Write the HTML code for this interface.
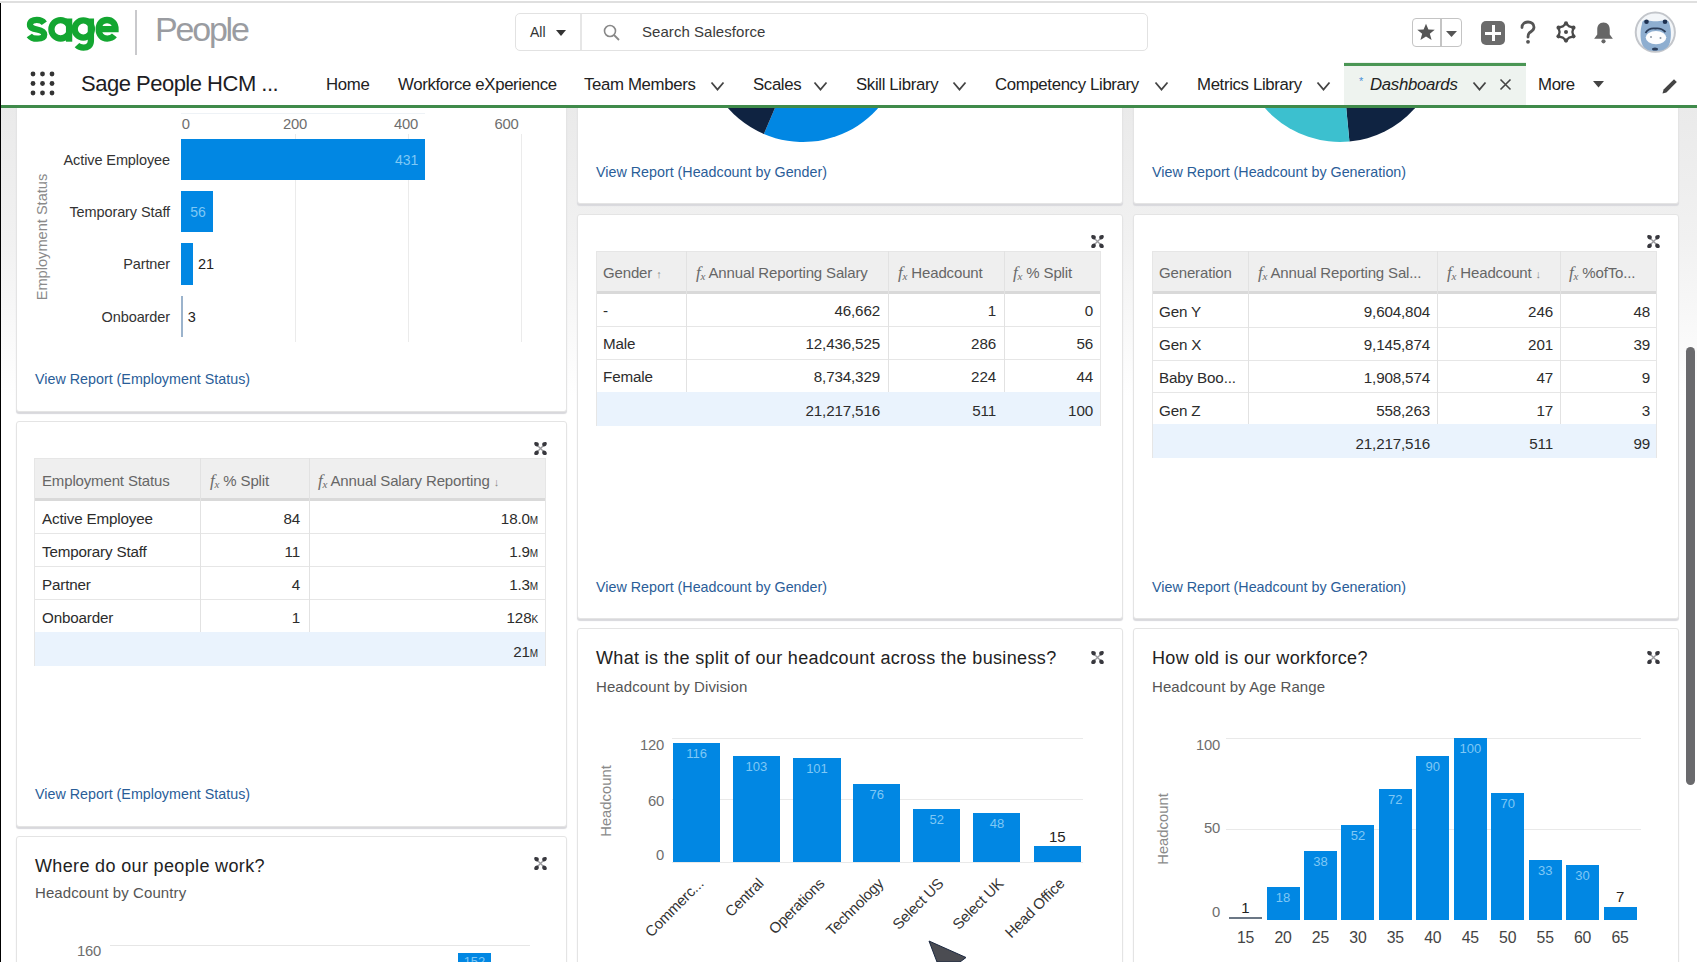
<!DOCTYPE html>
<html><head><meta charset="utf-8">
<style>
*{box-sizing:border-box;margin:0;padding:0}
html,body{width:1697px;height:962px;overflow:hidden;background:#fff;font-family:"Liberation Sans",sans-serif;color:#16325c}
.a{position:absolute;white-space:nowrap}
#top{position:absolute;left:0;top:0;width:1697px;height:107px;background:#fff}
.card{position:absolute;background:#fff;border:1px solid #e4e4e4;border-radius:3px;box-shadow:0 2px 1px #d8d8dc}
.nav{position:absolute;top:75px;font-size:16.8px;color:#222;letter-spacing:-0.35px}
.chev{position:absolute;top:81px}
.link{position:absolute;font-size:14.3px;color:#2a5d98;letter-spacing:0px}
.tbl{position:absolute;border-collapse:collapse;font-size:14px;color:#222}
.hdr{position:absolute;background:#f0f1f2;border-bottom:2px solid #dcdcdc}
.cell{position:absolute;font-size:14px;color:#222;letter-spacing:-0.3px}
.vl{position:absolute;width:1px;background:#e8e8e8}
.hl{position:absolute;height:1px;background:#e8e8e8}
.bar{position:absolute;background:#0187e3}
.ax{position:absolute;font-size:14.8px;color:#6e6e6e;letter-spacing:-0.2px}
.bl{position:absolute;font-size:13px;color:#7cc4f5;letter-spacing:-0.3px}
.ttl{position:absolute;font-size:18px;color:#222;letter-spacing:0.35px}
.sub{position:absolute;font-size:15px;color:#555;letter-spacing:0.1px}
</style></head>
<body>
<!-- page background -->
<div class="a" style="left:0;top:0;width:1697px;height:962px;background:#fff"></div>
<div class="a" style="left:0;top:3px;width:1.3px;height:962px;background:#000;z-index:50"></div>


<div class="a" style="left:1px;top:107px;width:1696px;height:290px;background:linear-gradient(#eaeaea,#f1f1f1 45%,#ffffff)"></div>
<div class="card" style="left:16px;top:60px;width:551px;height:352px"></div>
<div class="card" style="left:16px;top:421px;width:551px;height:406px"></div>
<div class="card" style="left:16px;top:836px;width:551px;height:264px"></div>
<div class="card" style="left:577px;top:60px;width:546px;height:144px"></div>
<div class="card" style="left:577px;top:214px;width:546px;height:405px"></div>
<div class="card" style="left:577px;top:628px;width:546px;height:472px"></div>
<div class="card" style="left:1133px;top:60px;width:546px;height:144px"></div>
<div class="card" style="left:1133px;top:214px;width:546px;height:405px"></div>
<div class="card" style="left:1133px;top:628px;width:546px;height:472px"></div>
<div class="a" style="left:181px;top:113px;width:244px;height:1px;background:#eef2f6"></div>
<div class="vl" style="left:294.5px;top:134px;height:208px;background:#ebebeb"></div>
<div class="vl" style="left:407.8px;top:134px;height:208px;background:#ebebeb"></div>
<div class="vl" style="left:521.0px;top:134px;height:208px;background:#ebebeb"></div>
<div class="ax" style="left:165.8px;top:116px;width:40px;text-align:center">0</div>
<div class="ax" style="left:275.0px;top:116px;width:40px;text-align:center">200</div>
<div class="ax" style="left:386.0px;top:116px;width:40px;text-align:center">400</div>
<div class="ax" style="left:486.5px;top:116px;width:40px;text-align:center">600</div>
<div class="bar" style="left:181px;top:139px;width:244.4px;height:41px;background:#0187e3"></div>
<div class="a lbl" style="left:0px;top:150.5px;width:170px;text-align:right;font-size:14.5px;color:#333;letter-spacing:-0.1px;line-height:18px">Active Employee</div>
<div class="a" style="left:365.4px;top:150.5px;width:53px;text-align:right;font-size:14px;color:#7fc8f5;line-height:18px">431</div>
<div class="bar" style="left:181px;top:191px;width:31.8px;height:41px;background:#0187e3"></div>
<div class="a lbl" style="left:0px;top:202.5px;width:170px;text-align:right;font-size:14.5px;color:#333;letter-spacing:-0.1px;line-height:18px">Temporary Staff</div>
<div class="a" style="left:152.8px;top:202.5px;width:53px;text-align:right;font-size:14px;color:#7fc8f5;line-height:18px">56</div>
<div class="bar" style="left:181px;top:243px;width:11.9px;height:42px;background:#0187e3"></div>
<div class="a lbl" style="left:0px;top:255.0px;width:170px;text-align:right;font-size:14.5px;color:#333;letter-spacing:-0.1px;line-height:18px">Partner</div>
<div class="a" style="left:197.9px;top:255.0px;font-size:14.5px;color:#222;line-height:18px">21</div>
<div class="bar" style="left:181px;top:296px;width:2.0px;height:41px;background:#9bb3cc"></div>
<div class="a lbl" style="left:0px;top:307.5px;width:170px;text-align:right;font-size:14.5px;color:#333;letter-spacing:-0.1px;line-height:18px">Onboarder</div>
<div class="a" style="left:187.7px;top:307.5px;font-size:14.5px;color:#222;line-height:18px">3</div>
<div class="a" style="left:42px;top:237px;width:0;height:0"><div class="a" style="left:-75px;top:-9px;width:150px;text-align:center;font-size:14.6px;color:#8a8a8a;letter-spacing:0px;line-height:18px;transform:rotate(-90deg)">Employment Status</div></div>
<div class="link a" style="left:35px;top:370px;line-height:18px">View Report (Employment Status)</div>
<svg class="a" style="left:533px;top:441px" width="15" height="15" viewBox="0 0 15 15"><path d="M4 4 L11 11 M11 4 L4 11" stroke="#9a9a9e" stroke-width="1.4"/><g fill="#38383e"><path d="M1.2 2.2 C1.2 0.8 3.6 0.6 5 1.6 C6.2 2.5 6 4.5 5 5.2 C3.8 6 1.2 5 1.2 2.2 Z"/><path d="M13.8 2.2 C13.8 0.8 11.4 0.6 10 1.6 C8.8 2.5 9 4.5 10 5.2 C11.2 6 13.8 5 13.8 2.2 Z"/><path d="M1.2 12.8 C1.2 14.2 3.6 14.4 5 13.4 C6.2 12.5 6 10.5 5 9.8 C3.8 9 1.2 10 1.2 12.8 Z"/><path d="M13.8 12.8 C13.8 14.2 11.4 14.4 10 13.4 C8.8 12.5 9 10.5 10 9.8 C11.2 9 13.8 10 13.8 12.8 Z"/></g></svg>
<div class="a" style="left:34px;top:458px;width:512px;height:42px;background:#efefef"></div>
<div class="a" style="left:34px;top:498px;width:512px;height:3px;background:#d9d9d9"></div>
<div class="a" style="left:34px;top:458px;width:512px;height:1px;background:#e6e6e6"></div>
<div class="hl" style="left:34px;top:533px;width:512px;background:#e6e6e6"></div>
<div class="hl" style="left:34px;top:566px;width:512px;background:#e6e6e6"></div>
<div class="hl" style="left:34px;top:599px;width:512px;background:#e6e6e6"></div>
<div class="hl" style="left:34px;top:632px;width:512px;background:#e6e6e6"></div>
<div class="a" style="left:34px;top:632px;width:512px;height:34px;background:#eaf3fd"></div>
<div class="vl" style="left:200px;top:458px;height:174px;background:#e2e2e2"></div>
<div class="vl" style="left:309px;top:458px;height:174px;background:#e2e2e2"></div>
<div class="vl" style="left:34px;top:458px;height:208px;background:#e6e6e6"></div>
<div class="vl" style="left:545px;top:458px;height:208px;background:#e6e6e6"></div>
<div class="a" style="left:42px;top:472px;font-size:15px;color:#666;letter-spacing:-0.15px;line-height:18px">Employment Status</div>
<div class="a" style="left:318px;top:472px;font-size:15px;color:#666;letter-spacing:-0.15px;line-height:18px"><i style="font-family:'Liberation Serif',serif;font-size:17px;color:#6a6a6a">f<span style="font-size:11px;position:relative;top:2px">x</span></i> Annual Salary Reporting <span style="font-size:11px;color:#888">&#8595;</span></div>
<div class="a" style="left:210px;top:472px;font-size:15px;color:#666;letter-spacing:-0.15px;line-height:18px"><i style="font-family:'Liberation Serif',serif;font-size:17px;color:#6a6a6a">f<span style="font-size:11px;position:relative;top:2px">x</span></i> % Split</div>
<div class="a" style="left:42px;top:509.5px;font-size:15.2px;color:#2c2c2c;letter-spacing:-0.15px;line-height:18px">Active Employee</div>
<div class="a" style="left:100px;top:509.5px;width:200px;text-align:right;font-size:15.2px;color:#2c2c2c;letter-spacing:-0.15px;line-height:18px">84</div>
<div class="a" style="left:338px;top:509.5px;width:200px;text-align:right;font-size:15.2px;color:#2c2c2c;letter-spacing:-0.15px;line-height:18px">18.0<span style="font-size:10px">M</span></div>
<div class="a" style="left:42px;top:542.5px;font-size:15.2px;color:#2c2c2c;letter-spacing:-0.15px;line-height:18px">Temporary Staff</div>
<div class="a" style="left:100px;top:542.5px;width:200px;text-align:right;font-size:15.2px;color:#2c2c2c;letter-spacing:-0.15px;line-height:18px">11</div>
<div class="a" style="left:338px;top:542.5px;width:200px;text-align:right;font-size:15.2px;color:#2c2c2c;letter-spacing:-0.15px;line-height:18px">1.9<span style="font-size:10px">M</span></div>
<div class="a" style="left:42px;top:575.5px;font-size:15.2px;color:#2c2c2c;letter-spacing:-0.15px;line-height:18px">Partner</div>
<div class="a" style="left:100px;top:575.5px;width:200px;text-align:right;font-size:15.2px;color:#2c2c2c;letter-spacing:-0.15px;line-height:18px">4</div>
<div class="a" style="left:338px;top:575.5px;width:200px;text-align:right;font-size:15.2px;color:#2c2c2c;letter-spacing:-0.15px;line-height:18px">1.3<span style="font-size:10px">M</span></div>
<div class="a" style="left:42px;top:608.5px;font-size:15.2px;color:#2c2c2c;letter-spacing:-0.15px;line-height:18px">Onboarder</div>
<div class="a" style="left:100px;top:608.5px;width:200px;text-align:right;font-size:15.2px;color:#2c2c2c;letter-spacing:-0.15px;line-height:18px">1</div>
<div class="a" style="left:338px;top:608.5px;width:200px;text-align:right;font-size:15.2px;color:#2c2c2c;letter-spacing:-0.15px;line-height:18px">128<span style="font-size:10px">K</span></div>
<div class="a" style="left:338px;top:642.5px;width:200px;text-align:right;font-size:15.2px;color:#2c2c2c;letter-spacing:-0.15px;line-height:18px">21<span style="font-size:10px">M</span></div>
<div class="link a" style="left:35px;top:785px;line-height:18px">View Report (Employment Status)</div>
<div class="ttl a" style="left:35px;top:855px;line-height:22px">Where do our people work?</div>
<div class="sub a" style="left:35px;top:884px;line-height:18px">Headcount by Country</div>
<svg class="a" style="left:533px;top:856px" width="15" height="15" viewBox="0 0 15 15"><path d="M4 4 L11 11 M11 4 L4 11" stroke="#9a9a9e" stroke-width="1.4"/><g fill="#38383e"><path d="M1.2 2.2 C1.2 0.8 3.6 0.6 5 1.6 C6.2 2.5 6 4.5 5 5.2 C3.8 6 1.2 5 1.2 2.2 Z"/><path d="M13.8 2.2 C13.8 0.8 11.4 0.6 10 1.6 C8.8 2.5 9 4.5 10 5.2 C11.2 6 13.8 5 13.8 2.2 Z"/><path d="M1.2 12.8 C1.2 14.2 3.6 14.4 5 13.4 C6.2 12.5 6 10.5 5 9.8 C3.8 9 1.2 10 1.2 12.8 Z"/><path d="M13.8 12.8 C13.8 14.2 11.4 14.4 10 13.4 C8.8 12.5 9 10.5 10 9.8 C11.2 9 13.8 10 13.8 12.8 Z"/></g></svg>
<div class="hl" style="left:110px;top:945px;width:420px;background:#e6e6e6"></div>
<div class="ax a" style="left:77px;top:943px;line-height:16px">160</div>
<div class="bar" style="left:458px;top:952.5px;width:33px;height:20px"></div>
<div class="a" style="left:458px;top:954px;width:33px;text-align:center;font-size:13px;color:#7fc8f5;line-height:16px">152</div>
<svg class="a" style="left:703px;top:108px" width="200" height="35" viewBox="703 108 200 35"><path d="M803 42 L903.00 42.00 A100 100 0 0 1 763.85 134.02 Z" fill="#0187e3"/><path d="M803 42 L763.85 134.02 A100 100 0 0 1 703.00 42.00 Z" fill="#0f2341"/></svg>
<div class="link a" style="left:596px;top:163px;line-height:18px">View Report (Headcount by Gender)</div>
<svg class="a" style="left:1240px;top:108px" width="200" height="35" viewBox="1240 108 200 35"><path d="M1340 42 L1440.00 42.00 A100 100 0 0 1 1349.41 141.56 Z" fill="#0f2341"/><path d="M1340 42 L1349.41 141.56 A100 100 0 0 1 1240.00 42.00 Z" fill="#3cc0cf"/></svg>
<div class="link a" style="left:1152px;top:163px;line-height:18px">View Report (Headcount by Generation)</div>
<svg class="a" style="left:1090px;top:234px" width="15" height="15" viewBox="0 0 15 15"><path d="M4 4 L11 11 M11 4 L4 11" stroke="#9a9a9e" stroke-width="1.4"/><g fill="#38383e"><path d="M1.2 2.2 C1.2 0.8 3.6 0.6 5 1.6 C6.2 2.5 6 4.5 5 5.2 C3.8 6 1.2 5 1.2 2.2 Z"/><path d="M13.8 2.2 C13.8 0.8 11.4 0.6 10 1.6 C8.8 2.5 9 4.5 10 5.2 C11.2 6 13.8 5 13.8 2.2 Z"/><path d="M1.2 12.8 C1.2 14.2 3.6 14.4 5 13.4 C6.2 12.5 6 10.5 5 9.8 C3.8 9 1.2 10 1.2 12.8 Z"/><path d="M13.8 12.8 C13.8 14.2 11.4 14.4 10 13.4 C8.8 12.5 9 10.5 10 9.8 C11.2 9 13.8 10 13.8 12.8 Z"/></g></svg>
<div class="a" style="left:596px;top:251px;width:505px;height:42px;background:#efefef"></div>
<div class="a" style="left:596px;top:291px;width:505px;height:3px;background:#d9d9d9"></div>
<div class="a" style="left:596px;top:251px;width:505px;height:1px;background:#e6e6e6"></div>
<div class="hl" style="left:596px;top:326px;width:505px;background:#e6e6e6"></div>
<div class="hl" style="left:596px;top:359px;width:505px;background:#e6e6e6"></div>
<div class="hl" style="left:596px;top:392px;width:505px;background:#e6e6e6"></div>
<div class="a" style="left:596px;top:392px;width:505px;height:34px;background:#eaf3fd"></div>
<div class="vl" style="left:686px;top:251px;height:141px;background:#e2e2e2"></div>
<div class="vl" style="left:888px;top:251px;height:141px;background:#e2e2e2"></div>
<div class="vl" style="left:1004px;top:251px;height:141px;background:#e2e2e2"></div>
<div class="vl" style="left:596px;top:251px;height:175px;background:#e6e6e6"></div>
<div class="vl" style="left:1100px;top:251px;height:175px;background:#e6e6e6"></div>
<div class="a" style="left:603px;top:264px;font-size:15px;color:#666;letter-spacing:-0.15px;line-height:18px">Gender <span style="font-size:11px;color:#888">&#8593;</span></div>
<div class="a" style="left:696px;top:264px;font-size:15px;color:#666;letter-spacing:-0.15px;line-height:18px"><i style="font-family:'Liberation Serif',serif;font-size:17px;color:#6a6a6a">f<span style="font-size:11px;position:relative;top:2px">x</span></i> Annual Reporting Salary</div>
<div class="a" style="left:898px;top:264px;font-size:15px;color:#666;letter-spacing:-0.15px;line-height:18px"><i style="font-family:'Liberation Serif',serif;font-size:17px;color:#6a6a6a">f<span style="font-size:11px;position:relative;top:2px">x</span></i> Headcount</div>
<div class="a" style="left:1013px;top:264px;font-size:15px;color:#666;letter-spacing:-0.15px;line-height:18px"><i style="font-family:'Liberation Serif',serif;font-size:17px;color:#6a6a6a">f<span style="font-size:11px;position:relative;top:2px">x</span></i> % Split</div>
<div class="a" style="left:603px;top:302.0px;font-size:15.2px;color:#2c2c2c;letter-spacing:-0.15px;line-height:18px">-</div>
<div class="a" style="left:680px;top:302.0px;width:200px;text-align:right;font-size:15.2px;color:#2c2c2c;letter-spacing:-0.15px;line-height:18px">46,662</div>
<div class="a" style="left:796px;top:302.0px;width:200px;text-align:right;font-size:15.2px;color:#2c2c2c;letter-spacing:-0.15px;line-height:18px">1</div>
<div class="a" style="left:893px;top:302.0px;width:200px;text-align:right;font-size:15.2px;color:#2c2c2c;letter-spacing:-0.15px;line-height:18px">0</div>
<div class="a" style="left:603px;top:335.0px;font-size:15.2px;color:#2c2c2c;letter-spacing:-0.15px;line-height:18px">Male</div>
<div class="a" style="left:680px;top:335.0px;width:200px;text-align:right;font-size:15.2px;color:#2c2c2c;letter-spacing:-0.15px;line-height:18px">12,436,525</div>
<div class="a" style="left:796px;top:335.0px;width:200px;text-align:right;font-size:15.2px;color:#2c2c2c;letter-spacing:-0.15px;line-height:18px">286</div>
<div class="a" style="left:893px;top:335.0px;width:200px;text-align:right;font-size:15.2px;color:#2c2c2c;letter-spacing:-0.15px;line-height:18px">56</div>
<div class="a" style="left:603px;top:368.0px;font-size:15.2px;color:#2c2c2c;letter-spacing:-0.15px;line-height:18px">Female</div>
<div class="a" style="left:680px;top:368.0px;width:200px;text-align:right;font-size:15.2px;color:#2c2c2c;letter-spacing:-0.15px;line-height:18px">8,734,329</div>
<div class="a" style="left:796px;top:368.0px;width:200px;text-align:right;font-size:15.2px;color:#2c2c2c;letter-spacing:-0.15px;line-height:18px">224</div>
<div class="a" style="left:893px;top:368.0px;width:200px;text-align:right;font-size:15.2px;color:#2c2c2c;letter-spacing:-0.15px;line-height:18px">44</div>
<div class="a" style="left:680px;top:401.5px;width:200px;text-align:right;font-size:15.2px;color:#2c2c2c;letter-spacing:-0.15px;line-height:18px">21,217,516</div>
<div class="a" style="left:796px;top:401.5px;width:200px;text-align:right;font-size:15.2px;color:#2c2c2c;letter-spacing:-0.15px;line-height:18px">511</div>
<div class="a" style="left:893px;top:401.5px;width:200px;text-align:right;font-size:15.2px;color:#2c2c2c;letter-spacing:-0.15px;line-height:18px">100</div>
<div class="link a" style="left:596px;top:578px;line-height:18px">View Report (Headcount by Gender)</div>
<svg class="a" style="left:1646px;top:234px" width="15" height="15" viewBox="0 0 15 15"><path d="M4 4 L11 11 M11 4 L4 11" stroke="#9a9a9e" stroke-width="1.4"/><g fill="#38383e"><path d="M1.2 2.2 C1.2 0.8 3.6 0.6 5 1.6 C6.2 2.5 6 4.5 5 5.2 C3.8 6 1.2 5 1.2 2.2 Z"/><path d="M13.8 2.2 C13.8 0.8 11.4 0.6 10 1.6 C8.8 2.5 9 4.5 10 5.2 C11.2 6 13.8 5 13.8 2.2 Z"/><path d="M1.2 12.8 C1.2 14.2 3.6 14.4 5 13.4 C6.2 12.5 6 10.5 5 9.8 C3.8 9 1.2 10 1.2 12.8 Z"/><path d="M13.8 12.8 C13.8 14.2 11.4 14.4 10 13.4 C8.8 12.5 9 10.5 10 9.8 C11.2 9 13.8 10 13.8 12.8 Z"/></g></svg>
<div class="a" style="left:1152px;top:251px;width:505px;height:42px;background:#efefef"></div>
<div class="a" style="left:1152px;top:291px;width:505px;height:3px;background:#d9d9d9"></div>
<div class="a" style="left:1152px;top:251px;width:505px;height:1px;background:#e6e6e6"></div>
<div class="hl" style="left:1152px;top:327px;width:505px;background:#e6e6e6"></div>
<div class="hl" style="left:1152px;top:360px;width:505px;background:#e6e6e6"></div>
<div class="hl" style="left:1152px;top:392px;width:505px;background:#e6e6e6"></div>
<div class="hl" style="left:1152px;top:424px;width:505px;background:#e6e6e6"></div>
<div class="a" style="left:1152px;top:424px;width:505px;height:34px;background:#eaf3fd"></div>
<div class="vl" style="left:1248px;top:251px;height:173px;background:#e2e2e2"></div>
<div class="vl" style="left:1437px;top:251px;height:173px;background:#e2e2e2"></div>
<div class="vl" style="left:1560px;top:251px;height:173px;background:#e2e2e2"></div>
<div class="vl" style="left:1152px;top:251px;height:207px;background:#e6e6e6"></div>
<div class="vl" style="left:1656px;top:251px;height:207px;background:#e6e6e6"></div>
<div class="a" style="left:1159px;top:264px;font-size:15px;color:#666;letter-spacing:-0.15px;line-height:18px">Generation</div>
<div class="a" style="left:1258px;top:264px;font-size:15px;color:#666;letter-spacing:-0.15px;line-height:18px"><i style="font-family:'Liberation Serif',serif;font-size:17px;color:#6a6a6a">f<span style="font-size:11px;position:relative;top:2px">x</span></i> Annual Reporting Sal...</div>
<div class="a" style="left:1447px;top:264px;font-size:15px;color:#666;letter-spacing:-0.15px;line-height:18px"><i style="font-family:'Liberation Serif',serif;font-size:17px;color:#6a6a6a">f<span style="font-size:11px;position:relative;top:2px">x</span></i> Headcount <span style="font-size:11px;color:#888">&#8595;</span></div>
<div class="a" style="left:1569px;top:264px;font-size:15px;color:#666;letter-spacing:-0.15px;line-height:18px"><i style="font-family:'Liberation Serif',serif;font-size:17px;color:#6a6a6a">f<span style="font-size:11px;position:relative;top:2px">x</span></i> %ofTo...</div>
<div class="a" style="left:1159px;top:302.5px;font-size:15.2px;color:#2c2c2c;letter-spacing:-0.15px;line-height:18px">Gen Y</div>
<div class="a" style="left:1230px;top:302.5px;width:200px;text-align:right;font-size:15.2px;color:#2c2c2c;letter-spacing:-0.15px;line-height:18px">9,604,804</div>
<div class="a" style="left:1353px;top:302.5px;width:200px;text-align:right;font-size:15.2px;color:#2c2c2c;letter-spacing:-0.15px;line-height:18px">246</div>
<div class="a" style="left:1450px;top:302.5px;width:200px;text-align:right;font-size:15.2px;color:#2c2c2c;letter-spacing:-0.15px;line-height:18px">48</div>
<div class="a" style="left:1159px;top:335.5px;font-size:15.2px;color:#2c2c2c;letter-spacing:-0.15px;line-height:18px">Gen X</div>
<div class="a" style="left:1230px;top:335.5px;width:200px;text-align:right;font-size:15.2px;color:#2c2c2c;letter-spacing:-0.15px;line-height:18px">9,145,874</div>
<div class="a" style="left:1353px;top:335.5px;width:200px;text-align:right;font-size:15.2px;color:#2c2c2c;letter-spacing:-0.15px;line-height:18px">201</div>
<div class="a" style="left:1450px;top:335.5px;width:200px;text-align:right;font-size:15.2px;color:#2c2c2c;letter-spacing:-0.15px;line-height:18px">39</div>
<div class="a" style="left:1159px;top:368.5px;font-size:15.2px;color:#2c2c2c;letter-spacing:-0.15px;line-height:18px">Baby Boo...</div>
<div class="a" style="left:1230px;top:368.5px;width:200px;text-align:right;font-size:15.2px;color:#2c2c2c;letter-spacing:-0.15px;line-height:18px">1,908,574</div>
<div class="a" style="left:1353px;top:368.5px;width:200px;text-align:right;font-size:15.2px;color:#2c2c2c;letter-spacing:-0.15px;line-height:18px">47</div>
<div class="a" style="left:1450px;top:368.5px;width:200px;text-align:right;font-size:15.2px;color:#2c2c2c;letter-spacing:-0.15px;line-height:18px">9</div>
<div class="a" style="left:1159px;top:401.5px;font-size:15.2px;color:#2c2c2c;letter-spacing:-0.15px;line-height:18px">Gen Z</div>
<div class="a" style="left:1230px;top:401.5px;width:200px;text-align:right;font-size:15.2px;color:#2c2c2c;letter-spacing:-0.15px;line-height:18px">558,263</div>
<div class="a" style="left:1353px;top:401.5px;width:200px;text-align:right;font-size:15.2px;color:#2c2c2c;letter-spacing:-0.15px;line-height:18px">17</div>
<div class="a" style="left:1450px;top:401.5px;width:200px;text-align:right;font-size:15.2px;color:#2c2c2c;letter-spacing:-0.15px;line-height:18px">3</div>
<div class="a" style="left:1230px;top:434.5px;width:200px;text-align:right;font-size:15.2px;color:#2c2c2c;letter-spacing:-0.15px;line-height:18px">21,217,516</div>
<div class="a" style="left:1353px;top:434.5px;width:200px;text-align:right;font-size:15.2px;color:#2c2c2c;letter-spacing:-0.15px;line-height:18px">511</div>
<div class="a" style="left:1450px;top:434.5px;width:200px;text-align:right;font-size:15.2px;color:#2c2c2c;letter-spacing:-0.15px;line-height:18px">99</div>
<div class="link a" style="left:1152px;top:578px;line-height:18px">View Report (Headcount by Generation)</div>
<div class="ttl a" style="left:596px;top:647px;line-height:22px">What is the split of our headcount across the business?</div>
<div class="sub a" style="left:596px;top:678px;line-height:18px">Headcount by Division</div>
<svg class="a" style="left:1090px;top:650px" width="15" height="15" viewBox="0 0 15 15"><path d="M4 4 L11 11 M11 4 L4 11" stroke="#9a9a9e" stroke-width="1.4"/><g fill="#38383e"><path d="M1.2 2.2 C1.2 0.8 3.6 0.6 5 1.6 C6.2 2.5 6 4.5 5 5.2 C3.8 6 1.2 5 1.2 2.2 Z"/><path d="M13.8 2.2 C13.8 0.8 11.4 0.6 10 1.6 C8.8 2.5 9 4.5 10 5.2 C11.2 6 13.8 5 13.8 2.2 Z"/><path d="M1.2 12.8 C1.2 14.2 3.6 14.4 5 13.4 C6.2 12.5 6 10.5 5 9.8 C3.8 9 1.2 10 1.2 12.8 Z"/><path d="M13.8 12.8 C13.8 14.2 11.4 14.4 10 13.4 C8.8 12.5 9 10.5 10 9.8 C11.2 9 13.8 10 13.8 12.8 Z"/></g></svg>
<div class="hl" style="left:672px;top:738px;width:411px;background:#e9e9e9"></div>
<div class="hl" style="left:672px;top:799px;width:411px;background:#e9e9e9"></div>
<div class="hl" style="left:672px;top:862px;width:411px;background:#e9e9e9"></div>
<div class="ax a" style="left:624px;top:736.6px;width:40px;text-align:right;line-height:16px">120</div>
<div class="ax a" style="left:624px;top:792.6px;width:40px;text-align:right;line-height:16px">60</div>
<div class="ax a" style="left:624px;top:847px;width:40px;text-align:right;line-height:16px">0</div>
<div class="a" style="left:605.5px;top:801px;width:0;height:0"><div class="a" style="left:-50px;top:-9px;width:100px;text-align:center;font-size:14.8px;color:#8a8a8a;line-height:18px;transform:rotate(-90deg)">Headcount</div></div>
<div class="bar" style="left:673.0px;top:743.0px;width:47.2px;height:118.7px"></div>
<div class="a" style="left:671.6px;top:746.0px;width:50px;text-align:center;font-size:13px;color:#7fc8f5;line-height:16px">116</div>
<div class="a" style="left:581.1px;top:872.0px;width:120px;text-align:right;font-size:15px;color:#333;line-height:18px;letter-spacing:-0.2px;transform-origin:100% 50%;transform:rotate(-45deg)">Commerc...</div>
<div class="bar" style="left:732.7px;top:756.3px;width:47.2px;height:105.4px"></div>
<div class="a" style="left:731.3px;top:759.3px;width:50px;text-align:center;font-size:13px;color:#7fc8f5;line-height:16px">103</div>
<div class="a" style="left:640.8px;top:872.0px;width:120px;text-align:right;font-size:15px;color:#333;line-height:18px;letter-spacing:-0.2px;transform-origin:100% 50%;transform:rotate(-45deg)">Central</div>
<div class="bar" style="left:793.4px;top:758.3px;width:47.2px;height:103.4px"></div>
<div class="a" style="left:792.0px;top:761.3px;width:50px;text-align:center;font-size:13px;color:#7fc8f5;line-height:16px">101</div>
<div class="a" style="left:701.5px;top:872.0px;width:120px;text-align:right;font-size:15px;color:#333;line-height:18px;letter-spacing:-0.2px;transform-origin:100% 50%;transform:rotate(-45deg)">Operations</div>
<div class="bar" style="left:853.2px;top:783.9px;width:47.2px;height:77.8px"></div>
<div class="a" style="left:851.8px;top:786.9px;width:50px;text-align:center;font-size:13px;color:#7fc8f5;line-height:16px">76</div>
<div class="a" style="left:761.3px;top:872.0px;width:120px;text-align:right;font-size:15px;color:#333;line-height:18px;letter-spacing:-0.2px;transform-origin:100% 50%;transform:rotate(-45deg)">Technology</div>
<div class="bar" style="left:913.2px;top:808.5px;width:47.2px;height:53.2px"></div>
<div class="a" style="left:911.8px;top:811.5px;width:50px;text-align:center;font-size:13px;color:#7fc8f5;line-height:16px">52</div>
<div class="a" style="left:821.3px;top:872.0px;width:120px;text-align:right;font-size:15px;color:#333;line-height:18px;letter-spacing:-0.2px;transform-origin:100% 50%;transform:rotate(-45deg)">Select US</div>
<div class="bar" style="left:973.3px;top:812.6px;width:47.2px;height:49.1px"></div>
<div class="a" style="left:971.9px;top:815.6px;width:50px;text-align:center;font-size:13px;color:#7fc8f5;line-height:16px">48</div>
<div class="a" style="left:881.4px;top:872.0px;width:120px;text-align:right;font-size:15px;color:#333;line-height:18px;letter-spacing:-0.2px;transform-origin:100% 50%;transform:rotate(-45deg)">Select UK</div>
<div class="bar" style="left:1033.7px;top:846.4px;width:47.2px;height:15.4px"></div>
<div class="a" style="left:1032.3px;top:828.9px;width:50px;text-align:center;font-size:15px;color:#222;line-height:16px">15</div>
<div class="a" style="left:941.8px;top:872.0px;width:120px;text-align:right;font-size:15px;color:#333;line-height:18px;letter-spacing:-0.2px;transform-origin:100% 50%;transform:rotate(-45deg)">Head Office</div>
<div class="ttl a" style="left:1152px;top:647px;line-height:22px">How old is our workforce?</div>
<div class="sub a" style="left:1152px;top:678px;line-height:18px">Headcount by Age Range</div>
<svg class="a" style="left:1646px;top:650px" width="15" height="15" viewBox="0 0 15 15"><path d="M4 4 L11 11 M11 4 L4 11" stroke="#9a9a9e" stroke-width="1.4"/><g fill="#38383e"><path d="M1.2 2.2 C1.2 0.8 3.6 0.6 5 1.6 C6.2 2.5 6 4.5 5 5.2 C3.8 6 1.2 5 1.2 2.2 Z"/><path d="M13.8 2.2 C13.8 0.8 11.4 0.6 10 1.6 C8.8 2.5 9 4.5 10 5.2 C11.2 6 13.8 5 13.8 2.2 Z"/><path d="M1.2 12.8 C1.2 14.2 3.6 14.4 5 13.4 C6.2 12.5 6 10.5 5 9.8 C3.8 9 1.2 10 1.2 12.8 Z"/><path d="M13.8 12.8 C13.8 14.2 11.4 14.4 10 13.4 C8.8 12.5 9 10.5 10 9.8 C11.2 9 13.8 10 13.8 12.8 Z"/></g></svg>
<div class="hl" style="left:1226px;top:737.6px;width:415px;background:#e9e9e9"></div>
<div class="hl" style="left:1226px;top:828.6px;width:415px;background:#e9e9e9"></div>
<div class="ax a" style="left:1180px;top:736.6px;width:40px;text-align:right;line-height:16px">100</div>
<div class="ax a" style="left:1180px;top:820px;width:40px;text-align:right;line-height:16px">50</div>
<div class="ax a" style="left:1180px;top:904.4px;width:40px;text-align:right;line-height:16px">0</div>
<div class="a" style="left:1162.5px;top:829px;width:0;height:0"><div class="a" style="left:-50px;top:-9px;width:100px;text-align:center;font-size:14.8px;color:#8a8a8a;line-height:18px;transform:rotate(-90deg)">Headcount</div></div>
<div class="a" style="left:1229.0px;top:917px;width:33px;height:2px;background:#6b7785"></div>
<div class="a" style="left:1220.5px;top:899.7px;width:50px;text-align:center;font-size:15px;color:#222;line-height:16px">1</div>
<div class="ax a" style="left:1220.5px;top:928.5px;width:50px;text-align:center;font-size:15.8px;color:#444;line-height:18px">15</div>
<div class="bar" style="left:1266.5px;top:887.2px;width:33px;height:32.8px"></div>
<div class="a" style="left:1258.0px;top:890.2px;width:50px;text-align:center;font-size:13px;color:#7fc8f5;line-height:16px">18</div>
<div class="ax a" style="left:1258.0px;top:928.5px;width:50px;text-align:center;font-size:15.8px;color:#444;line-height:18px">20</div>
<div class="bar" style="left:1303.9px;top:850.8px;width:33px;height:69.2px"></div>
<div class="a" style="left:1295.4px;top:853.8px;width:50px;text-align:center;font-size:13px;color:#7fc8f5;line-height:16px">38</div>
<div class="ax a" style="left:1295.4px;top:928.5px;width:50px;text-align:center;font-size:15.8px;color:#444;line-height:18px">25</div>
<div class="bar" style="left:1341.4px;top:825.4px;width:33px;height:94.6px"></div>
<div class="a" style="left:1332.9px;top:828.4px;width:50px;text-align:center;font-size:13px;color:#7fc8f5;line-height:16px">52</div>
<div class="ax a" style="left:1332.9px;top:928.5px;width:50px;text-align:center;font-size:15.8px;color:#444;line-height:18px">30</div>
<div class="bar" style="left:1378.8px;top:789.0px;width:33px;height:131.0px"></div>
<div class="a" style="left:1370.3px;top:792.0px;width:50px;text-align:center;font-size:13px;color:#7fc8f5;line-height:16px">72</div>
<div class="ax a" style="left:1370.3px;top:928.5px;width:50px;text-align:center;font-size:15.8px;color:#444;line-height:18px">35</div>
<div class="bar" style="left:1416.3px;top:756.2px;width:33px;height:163.8px"></div>
<div class="a" style="left:1407.8px;top:759.2px;width:50px;text-align:center;font-size:13px;color:#7fc8f5;line-height:16px">90</div>
<div class="ax a" style="left:1407.8px;top:928.5px;width:50px;text-align:center;font-size:15.8px;color:#444;line-height:18px">40</div>
<div class="bar" style="left:1453.8px;top:738.0px;width:33px;height:182.0px"></div>
<div class="a" style="left:1445.3px;top:741.0px;width:50px;text-align:center;font-size:13px;color:#7fc8f5;line-height:16px">100</div>
<div class="ax a" style="left:1445.3px;top:928.5px;width:50px;text-align:center;font-size:15.8px;color:#444;line-height:18px">45</div>
<div class="bar" style="left:1491.2px;top:792.6px;width:33px;height:127.4px"></div>
<div class="a" style="left:1482.7px;top:795.6px;width:50px;text-align:center;font-size:13px;color:#7fc8f5;line-height:16px">70</div>
<div class="ax a" style="left:1482.7px;top:928.5px;width:50px;text-align:center;font-size:15.8px;color:#444;line-height:18px">50</div>
<div class="bar" style="left:1528.7px;top:859.9px;width:33px;height:60.1px"></div>
<div class="a" style="left:1520.2px;top:862.9px;width:50px;text-align:center;font-size:13px;color:#7fc8f5;line-height:16px">33</div>
<div class="ax a" style="left:1520.2px;top:928.5px;width:50px;text-align:center;font-size:15.8px;color:#444;line-height:18px">55</div>
<div class="bar" style="left:1566.1px;top:865.4px;width:33px;height:54.6px"></div>
<div class="a" style="left:1557.6px;top:868.4px;width:50px;text-align:center;font-size:13px;color:#7fc8f5;line-height:16px">30</div>
<div class="ax a" style="left:1557.6px;top:928.5px;width:50px;text-align:center;font-size:15.8px;color:#444;line-height:18px">60</div>
<div class="bar" style="left:1603.6px;top:907.3px;width:33px;height:12.7px"></div>
<div class="a" style="left:1595.1px;top:888.8px;width:50px;text-align:center;font-size:15px;color:#222;line-height:16px">7</div>
<div class="ax a" style="left:1595.1px;top:928.5px;width:50px;text-align:center;font-size:15.8px;color:#444;line-height:18px">65</div>
<div class="a" style="left:1686px;top:347px;width:9px;height:438px;border-radius:5px;background:#6a6a6d"></div>
<svg class="a" style="left:920px;top:935px" width="60" height="30"><path d="M9 6 L46 22.5 L40 27 L17 27 Z" fill="#4b4c52" stroke="#1b2840" stroke-width="1"/></svg>
<!-- TOP HEADER -->
<div id="top">
  <div class="a" style="left:0;top:1px;width:1697px;height:2px;background:#dfdfdf"></div>
  <svg class="a" style="left:0;top:0" width="130" height="60" viewBox="0 0 130 60"><g fill="none" stroke="#13a631" stroke-width="6.3" stroke-linecap="round">
<path d="M44.3 23.2 C42.6 20.8 39.6 19.9 36.8 19.9 C32.6 19.9 30 21.7 30 24.8 C30 28 33 28.7 37 29.5 C41.3 30.4 44.2 31.5 44.2 34.6 C44.2 37.6 41.4 38.7 37.2 38.7 C33.4 38.7 30.8 37.6 29.3 35.4" stroke-linecap="butt"/>
<circle cx="60.6" cy="29.3" r="9.2"/>
<path d="M69.1 18.5 L69.1 41.7" stroke-linecap="butt"/>
<circle cx="83.3" cy="29" r="8.6"/>
<path d="M90.9 18.5 L90.9 40.5 C90.9 45.8 87.5 47.6 83.5 47.6 C80.5 47.6 78.5 46.8 77 45.2" stroke-linecap="butt"/>
<path d="M98.8 29.2 L115.5 29.2 C115.5 23.5 112 20 107 20 C101.8 20 98.7 24 98.7 29.3 C98.7 34.6 102 38.6 107.2 38.6 C110.6 38.6 112.8 37.4 114.4 35.4" stroke-linecap="butt"/>
</g></svg>
  <div class="a" style="left:135px;top:10px;width:2px;height:45px;background:#c9c9cc"></div>
  <div class="a" style="left:155px;top:9px;font-size:34px;color:#9a9ca1;letter-spacing:-2.2px;line-height:40px">People</div>
  <!-- search -->
  <div class="a" style="left:515px;top:13px;width:633px;height:38px;border:1.5px solid #e2e2e2;border-radius:5px;background:#fff"></div>
  <div class="a" style="left:580px;top:14px;width:1.5px;height:36px;background:#e6e6e6"></div>
  <div class="a" style="left:530px;top:24px;font-size:14px;color:#333;line-height:16px">All</div>
  <svg class="a" style="left:555px;top:29px" width="12" height="8"><path d="M1 1 L11 1 L6 7 Z" fill="#333"/></svg>
  <svg class="a" style="left:602px;top:23px" width="20" height="20"><circle cx="8" cy="8" r="5.5" fill="none" stroke="#888" stroke-width="1.6"/><path d="M12 12 L17 17" stroke="#888" stroke-width="1.8"/></svg>
  <div class="a" style="left:642px;top:23px;font-size:15px;color:#3a3a3a;line-height:17px;letter-spacing:0.05px">Search Salesforce</div>
  <!-- right icons -->
  <div class="a" style="left:1412px;top:18px;width:50px;height:29px;border:1.5px solid #c4c4c4;border-radius:4px"></div>
  <div class="a" style="left:1440px;top:19px;width:1.5px;height:27px;background:#c4c4c4"></div>
  <svg class="a" style="left:1416px;top:22px" width="20" height="20" viewBox="0 0 24 24"><path d="M12 2 L14.9 9 L22.5 9.3 L16.6 14.1 L18.7 21.5 L12 17.3 L5.3 21.5 L7.4 14.1 L1.5 9.3 L9.1 9 Z" fill="#555"/></svg>
  <svg class="a" style="left:1445px;top:30px" width="13" height="8"><path d="M1 1 L12 1 L6.5 7 Z" fill="#555"/></svg>
  <div class="a" style="left:1481px;top:21px;width:24px;height:24px;background:#6b6b6b;border-radius:5px"></div>
  <div class="a" style="left:1491.5px;top:25px;width:3px;height:16px;background:#fff"></div>
  <div class="a" style="left:1485px;top:31.5px;width:16px;height:3px;background:#fff"></div>
  <svg class="a" style="left:1518px;top:20px" width="20" height="25" viewBox="0 0 20 25"><path d="M4 7.5 C4 3.5 7 2 10 2 C13.5 2 16 4 16 7.2 C16 10.5 13 11.5 11.2 13 C10.2 14 10 15 10 17" fill="none" stroke="#555" stroke-width="2.8" stroke-linecap="round"/><circle cx="10" cy="21.8" r="1.9" fill="#555"/></svg>
  <svg class="a" style="left:1555px;top:21px" width="22" height="22" viewBox="0 0 22 22"><path d="M11.00 2.40 L14.20 5.46 L18.45 6.70 L17.40 11.00 L18.45 15.30 L14.20 16.54 L11.00 19.60 L7.80 16.54 L3.55 15.30 L4.60 11.00 L3.55 6.70 L7.80 5.46 Z" fill="none" stroke="#4a4a4a" stroke-width="2.3" stroke-linejoin="round"/><g fill="#4a4a4a"><circle cx="11.00" cy="2.40" r="2.1"/><circle cx="18.45" cy="6.70" r="2.1"/><circle cx="18.45" cy="15.30" r="2.1"/><circle cx="11.00" cy="19.60" r="2.1"/><circle cx="3.55" cy="15.30" r="2.1"/><circle cx="3.55" cy="6.70" r="2.1"/><circle cx="11" cy="11" r="2"/></g></svg>
  <svg class="a" style="left:1591px;top:20px" width="25" height="25" viewBox="0 0 24 24"><path d="M12 2.5 C8 2.5 6 5.5 6 9 L6 14 L3 18 L21 18 L18 14 L18 9 C18 5.5 16 2.5 12 2.5 Z" fill="#666"/><circle cx="12" cy="20.5" r="2" fill="#666"/></svg>
  <svg class="a" style="left:1630px;top:7px" width="50" height="50" viewBox="1630 7 50 50">
  <circle cx="1655.3" cy="32.2" r="19.6" fill="#f3f6f9" stroke="#c3c6cb" stroke-width="2"/>
  <path d="M1642 24 C1642 20 1645 19.5 1648 20.5 C1652 21.5 1659 21.5 1663 20.5 C1666 19.5 1669 20 1669.5 24 C1671.5 30 1671.5 40 1669 45 C1666 50 1661 51 1655.5 51 C1650 51 1645 50 1642.5 45 C1640 40 1640 30 1642 24 Z" fill="#8eaed0"/>
  <circle cx="1646.5" cy="21.8" r="2.3" fill="#1d3050"/>
  <circle cx="1665" cy="21.8" r="2.3" fill="#1d3050"/>
  <ellipse cx="1656" cy="37.6" rx="10.3" ry="6.6" fill="#fdfdfe"/>
  <path d="M1645.5 33 C1648 29 1652 28 1655.5 28.5 C1659 28 1663 29.5 1665.5 32" fill="none" stroke="#2b3d5a" stroke-width="1.8"/>
  <circle cx="1651" cy="37" r="1" fill="#8a96a6"/><circle cx="1660.5" cy="38" r="1" fill="#8a96a6"/>
  <ellipse cx="1655" cy="49" rx="3" ry="1.6" fill="#2b3d5a"/>
</svg>
</div>
<!-- NAV -->
<svg class="a" style="left:30px;top:71px" width="26" height="26">
  <g fill="#333"><circle cx="3" cy="3" r="2.4"/><circle cx="12.5" cy="3" r="2.4"/><circle cx="22" cy="3" r="2.4"/><circle cx="3" cy="12.5" r="2.4"/><circle cx="12.5" cy="12.5" r="2.4"/><circle cx="22" cy="12.5" r="2.4"/><circle cx="3" cy="22" r="2.4"/><circle cx="12.5" cy="22" r="2.4"/><circle cx="22" cy="22" r="2.4"/></g>
</svg>
<div class="a" style="left:81px;top:71px;font-size:22px;color:#1d1d24;letter-spacing:-0.5px;line-height:26px">Sage People HCM ...</div>
<div class="nav a" style="left:326px">Home</div>
<div class="nav a" style="left:398px">Workforce eXperience</div>
<div class="nav a" style="left:584px">Team Members</div>
<div class="nav a" style="left:753px">Scales</div>
<div class="nav a" style="left:856px">Skill Library</div>
<div class="nav a" style="left:995px">Competency Library</div>
<div class="nav a" style="left:1197px">Metrics Library</div>
<svg class="chev a" style="left:710px" width="15" height="11"><path d="M1.5 1.5 L7.5 8.5 L13.5 1.5" fill="none" stroke="#444" stroke-width="1.8"/></svg>
<svg class="chev a" style="left:813px" width="15" height="11"><path d="M1.5 1.5 L7.5 8.5 L13.5 1.5" fill="none" stroke="#444" stroke-width="1.8"/></svg>
<svg class="chev a" style="left:952px" width="15" height="11"><path d="M1.5 1.5 L7.5 8.5 L13.5 1.5" fill="none" stroke="#444" stroke-width="1.8"/></svg>
<svg class="chev a" style="left:1154px" width="15" height="11"><path d="M1.5 1.5 L7.5 8.5 L13.5 1.5" fill="none" stroke="#444" stroke-width="1.8"/></svg>
<svg class="chev a" style="left:1316px" width="15" height="11"><path d="M1.5 1.5 L7.5 8.5 L13.5 1.5" fill="none" stroke="#444" stroke-width="1.8"/></svg>
<div class="a" style="left:1344px;top:62px;width:182px;height:43px;background:#eef3ef"></div>
<div class="a" style="left:1344px;top:62.5px;width:182px;height:3px;background:#4a9654"></div>
<div class="a" style="left:1359px;top:75px;font-size:11px;color:#4a90d8">*</div>
<div class="nav a" style="left:1370px;font-style:italic;letter-spacing:-0.3px">Dashboards</div>
<svg class="chev a" style="left:1472px" width="15" height="11"><path d="M1.5 1.5 L7.5 8.5 L13.5 1.5" fill="none" stroke="#444" stroke-width="1.8"/></svg>
<svg class="a" style="left:1499px;top:78px" width="13" height="13"><path d="M1.5 1.5 L11.5 11.5 M11.5 1.5 L1.5 11.5" stroke="#444" stroke-width="1.6"/></svg>
<div class="nav a" style="left:1538px">More</div>
<svg class="a" style="left:1592px;top:80px" width="13" height="8"><path d="M1 1 L12 1 L6.5 7.5 Z" fill="#444"/></svg>
<svg class="a" style="left:1661px;top:77px" width="18" height="18" viewBox="0 0 18 18"><path d="M1.5 16.5 L2.6 12.6 L13 2.2 L15.8 5 L5.4 15.4 Z" fill="#444"/></svg>

<div class="a" style="left:0;top:105px;width:1697px;height:3px;background:#3f8a4a;z-index:20"></div>

</body></html>
